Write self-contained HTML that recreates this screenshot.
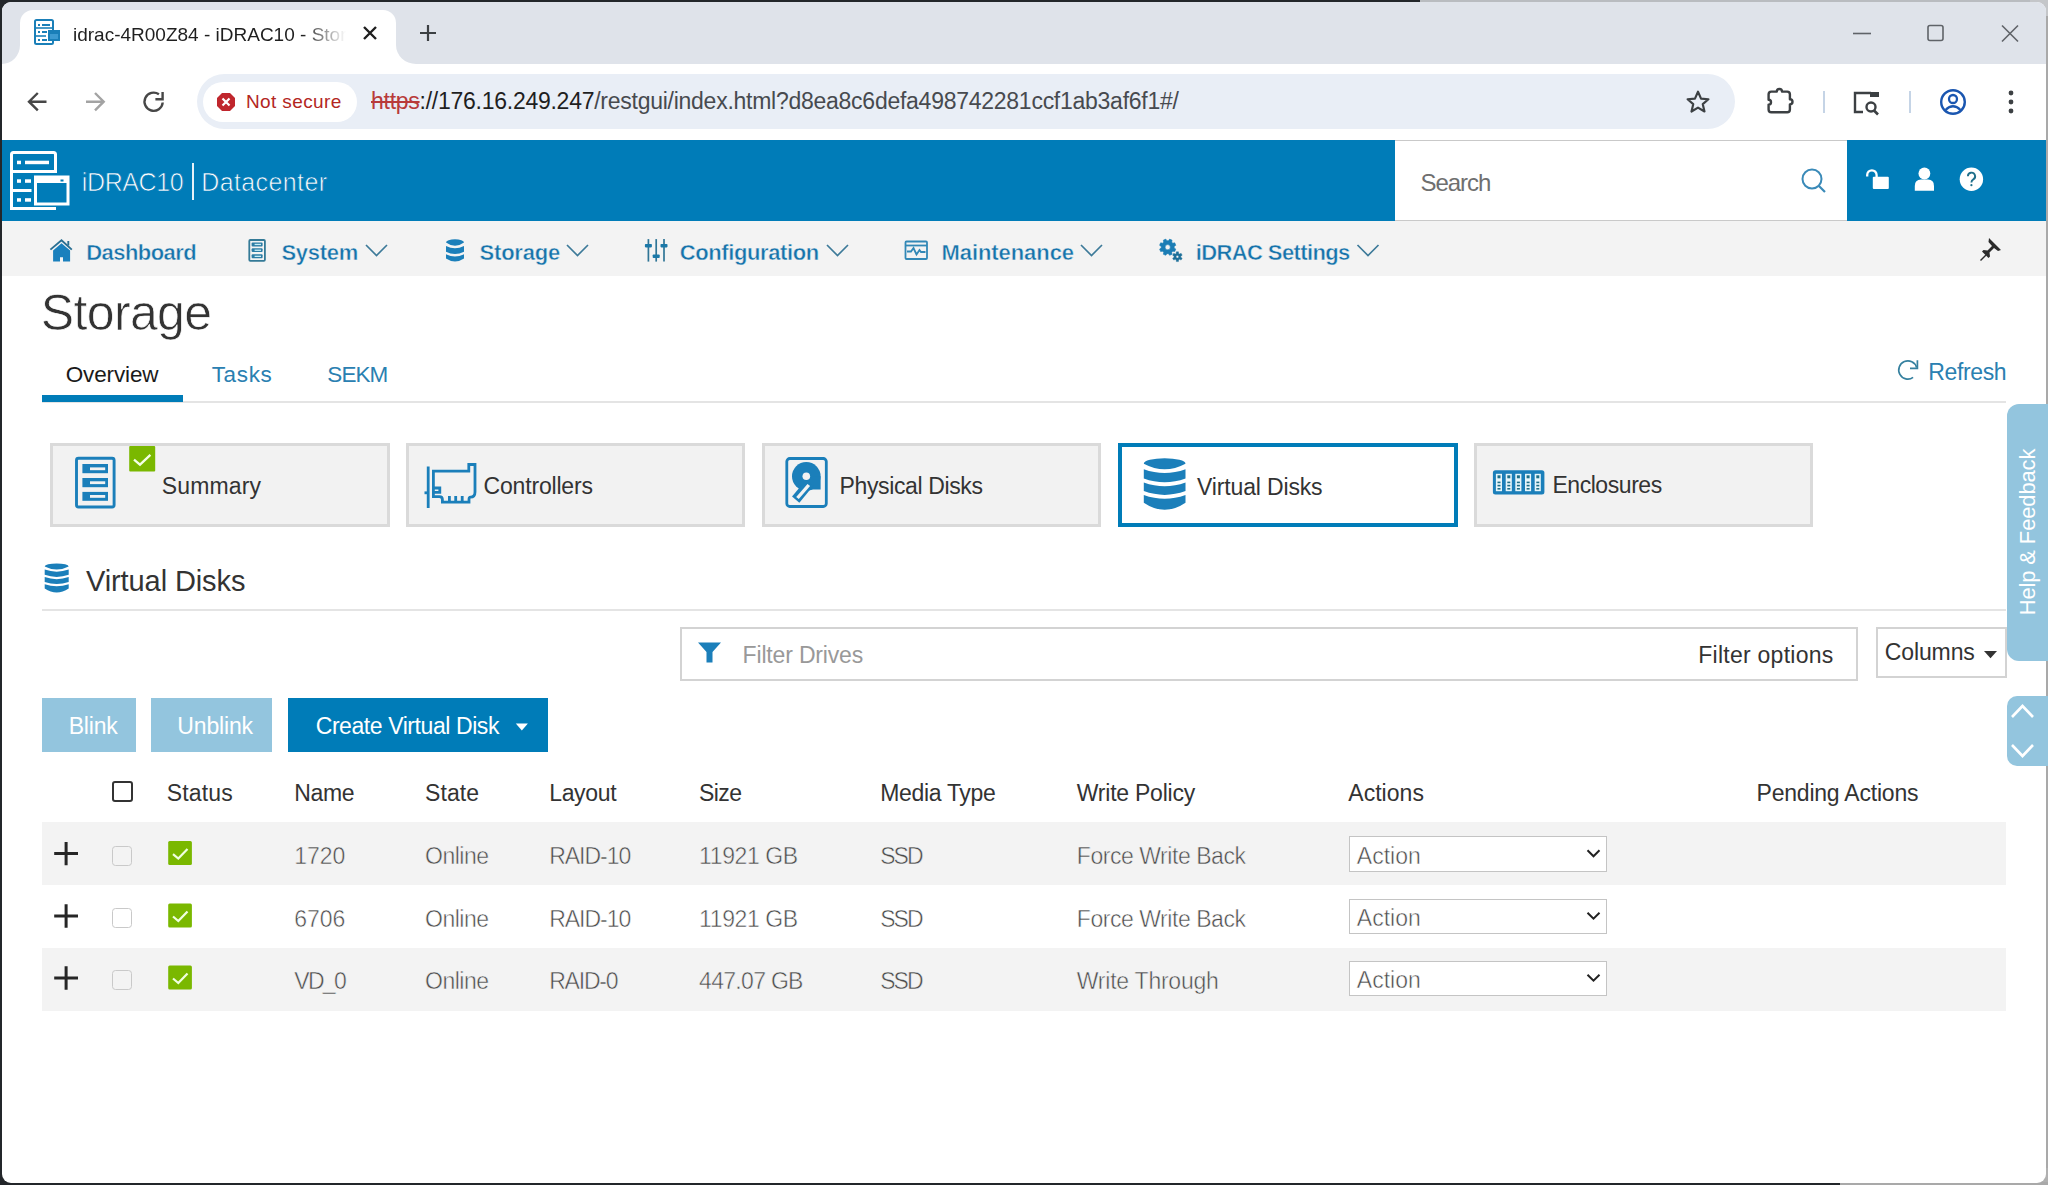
<!DOCTYPE html>
<html><head><meta charset="utf-8"><style>
html,body{margin:0;padding:0;}
body{width:2048px;height:1185px;overflow:hidden;background:#23262a;position:relative;font-family:"Liberation Sans",sans-serif;}
.a{position:absolute;}
.t{position:absolute;white-space:nowrap;line-height:1;}
svg{position:absolute;overflow:visible;}
</style></head><body>
<div class="a" style="left:1420px;top:0;width:628px;height:3px;background:#b9bcc0;"></div>
<div class="a" style="left:2045px;top:0;width:3px;height:1185px;background:#a9a9a9;"></div>
<div class="a" style="left:2030px;top:0;width:18px;height:16px;background:#c4c6c9;"></div>
<div class="a" style="left:2030px;top:1168px;width:18px;height:17px;background:#b0b0b0;"></div>
<div class="a" style="left:1840px;top:1182px;width:208px;height:3px;background:#a9a9a9;"></div>
<div class="a" style="left:2px;top:2px;width:2044px;height:1181px;background:#fff;border-radius:9px;"></div>
<div class="a" style="left:2px;top:2px;width:2044px;height:62px;background:#dfe3ea;border-radius:9px 9px 0 0;"></div>
<div class="a" style="left:20px;top:10px;width:376px;height:54px;background:#fff;border-radius:13px 13px 0 0;"></div>
<svg style="left:2px;top:45px" width="18" height="19"><path d="M0 19 A18 19 0 0 0 18 0 L18 19 Z" fill="#fff"/></svg>
<svg style="left:396px;top:45px" width="20" height="19"><path d="M20 19 A20 19 0 0 1 0 0 L0 19 Z" fill="#fff"/></svg>
<svg style="left:34px;top:19px" width="27" height="27" viewBox="0 0 27 27">
  <rect x="1" y="1" width="18" height="24" rx="1.5" fill="none" stroke="#1a7fb8" stroke-width="2"/>
  <line x1="1" y1="9" x2="19" y2="9" stroke="#1a7fb8" stroke-width="1.6"/>
  <line x1="1" y1="17" x2="12" y2="17" stroke="#1a7fb8" stroke-width="1.6"/>
  <rect x="4" y="5" width="2" height="2" fill="#1a7fb8"/><rect x="8" y="5" width="8" height="2" fill="#1a7fb8"/>
  <rect x="4" y="12" width="2" height="2" fill="#1a7fb8"/><rect x="8" y="12" width="5" height="2" fill="#1a7fb8"/>
  <rect x="4" y="20" width="2" height="2" fill="#1a7fb8"/><rect x="8" y="20" width="5" height="2" fill="#1a7fb8"/>
  <rect x="14" y="11" width="12" height="11" fill="#1a7fb8"/>
  <rect x="16" y="15" width="8" height="5" fill="#3d9ad0"/>
</svg>
<div class="t" style="left:73px;top:25px;font-size:19px;color:#1f1f1f;width:273px;overflow:hidden;-webkit-mask-image:linear-gradient(to right,#000 84%,transparent 100%);">idrac-4R00Z84 - iDRAC10 - Storage</div>
<svg style="left:362px;top:25px" width="16" height="16"><path d="M2 2 L14 14 M14 2 L2 14" stroke="#1f1f1f" stroke-width="2.4"/></svg>
<svg style="left:419px;top:24px" width="18" height="18"><path d="M9 1 V17 M1 9 H17" stroke="#3c4043" stroke-width="2.2"/></svg>
<svg style="left:1852px;top:24px" width="20" height="20"><path d="M1 9.5 H19" stroke="#5f6368" stroke-width="1.6"/></svg>
<svg style="left:1926px;top:24px" width="20" height="20"><rect x="2" y="1.5" width="15" height="15" rx="2" fill="none" stroke="#5f6368" stroke-width="1.6"/></svg>
<svg style="left:2000px;top:24px" width="20" height="20"><path d="M2 1.5 L18 17.5 M18 1.5 L2 17.5" stroke="#5f6368" stroke-width="1.6"/></svg>
<div class="a" style="left:2px;top:64px;width:2044px;height:76px;background:#fff;"></div>
<svg style="left:0;top:0" width="2048" height="1185"><g fill="none" stroke-width="2.4"><path d="M46.5 101.7 H29 M37.8 93 L29 101.7 L37.8 110.4" stroke="#474747"/><path d="M86 101.7 H103 M95 93 L103.7 101.7 L95 110.4" stroke="#a3a3a3"/><path d="M162.7 102.5 A9.1 9.1 0 1 1 158.9 94.3" stroke="#474747"/><path d="M155.4 99.3 H162.6 V92" stroke="#474747"/></g></svg>
<div class="a" style="left:197px;top:74px;width:1538px;height:55px;background:#e9eef6;border-radius:28px;"></div>
<div class="a" style="left:203px;top:82px;width:154px;height:40px;background:#fff;border-radius:20px;"></div>
<svg style="left:216px;top:92px" width="20" height="20" viewBox="0 0 20 20"><path d="M6 1 H14 L19 6 V14 L14 19 H6 L1 14 V6 Z" fill="#c0262d"/><path d="M6.5 6.5 L13.5 13.5 M13.5 6.5 L6.5 13.5" stroke="#fff" stroke-width="2.2"/></svg>
<div class="t" style="left:246px;top:92px;font-size:19px;letter-spacing:0.38px;color:#b3261e;">Not secure</div>
<div class="t" style="left:371px;top:90px;font-size:23px;letter-spacing:-0.26px;color:#1f1f1f;"><span style="color:#b83a3a;text-decoration:line-through;text-decoration-thickness:2px;">https</span>://176.16.249.247<span style="color:#474a4f">/restgui/index.html?d8ea8c6defa498742281ccf1ab3af6f1#/</span></div>
<svg style="left:1685px;top:89px" width="26" height="26" viewBox="0 0 24 24"><path d="M12 2.5 L14.8 8.9 L21.6 9.5 L16.4 14 L18 20.8 L12 17.2 L6 20.8 L7.6 14 L2.4 9.5 L9.2 8.9 Z" fill="none" stroke="#3c4043" stroke-width="2" stroke-linejoin="round"/></svg>
<svg style="left:0;top:0" width="2048" height="1185"><path d="M1768.6 94.3 Q1768.6 91.6 1771.3 91.6 H1776.8 A2.6 2.6 0 0 1 1782 91.6 H1787.2 Q1789.9 91.6 1789.9 94.3 V99.2 A2.6 2.6 0 0 1 1789.9 104.4 V109.6 Q1789.9 112.3 1787.2 112.3 H1771.3 Q1768.6 112.3 1768.6 109.6 V104.6 A2.4 2.4 0 0 0 1768.6 99.8 Z" fill="none" stroke="#3c4043" stroke-width="2.4" stroke-linejoin="round"/></svg>
<div class="a" style="left:1823px;top:91px;width:2px;height:22px;background:#c5d4e6;"></div>
<svg style="left:1852px;top:89px" width="30" height="28" viewBox="0 0 30 28"><path d="M19 4 H3 V23 H11" fill="none" stroke="#3c4043" stroke-width="2.4"/><rect x="18" y="3" width="9" height="5" fill="#3c4043"/><circle cx="19" cy="18" r="4.5" fill="none" stroke="#3c4043" stroke-width="2.4"/><path d="M22 21.5 L26 25.5" stroke="#3c4043" stroke-width="2.6"/></svg>
<div class="a" style="left:1909px;top:91px;width:2px;height:22px;background:#c5d4e6;"></div>
<svg style="left:1939px;top:88px" width="28" height="28" viewBox="0 0 28 28"><circle cx="14" cy="14" r="11.8" fill="none" stroke="#1a56b0" stroke-width="2.4"/><circle cx="14" cy="11" r="4" fill="none" stroke="#1a56b0" stroke-width="2.3"/><path d="M6.5 22 Q14 14.5 21.5 22" fill="none" stroke="#1a56b0" stroke-width="2.3"/></svg>
<svg style="left:2006px;top:90px" width="10" height="24"><circle cx="5" cy="3" r="2.4" fill="#3c4043"/><circle cx="5" cy="12" r="2.4" fill="#3c4043"/><circle cx="5" cy="21" r="2.4" fill="#3c4043"/></svg>
<div class="a" style="left:2px;top:140px;width:2044px;height:81px;background:#007cb8;"></div>
<svg style="left:0;top:0" width="2048" height="1185">
<g fill="none" stroke="#fff" stroke-width="3">
 <path d="M56 208.5 H11.5 V154.5 Q11.5 152.5 13.5 152.5 H53.5 Q55.5 152.5 55.5 154.5 V173"/>
 <line x1="11.5" y1="171.5" x2="55.5" y2="171.5"/>
 <line x1="11.5" y1="190.5" x2="31.5" y2="190.5"/>
 <rect x="35.5" y="177" width="32.5" height="27" />
</g>
<g fill="#fff">
 <rect x="17" y="160.7" width="4" height="3.5"/><rect x="25" y="160.7" width="24" height="3.5"/>
 <rect x="17" y="179.3" width="4" height="3.5"/><rect x="25" y="179.3" width="6" height="3.5"/>
 <rect x="17" y="198.2" width="4" height="3.5"/><rect x="25" y="198.2" width="6" height="3.5"/>
 <rect x="35.5" y="177" width="32.5" height="6"/>
 <rect x="60.5" y="179.5" width="3" height="2" fill="#007cb8"/>
</g>
</svg>
<div class="t" style="left:81.8px;top:170.4px;font-size:25px;letter-spacing:-0.38px;color:#fff;-webkit-text-stroke:0.7px #007cb8;">iDRAC10</div>
<div class="a" style="left:192px;top:163px;width:2px;height:37px;background:#e6f1f8;"></div>
<div class="t" style="left:201.2px;top:170.4px;font-size:25px;letter-spacing:0.40px;color:#fff;-webkit-text-stroke:0.7px #007cb8;">Datacenter</div>
<div class="a" style="left:1395px;top:140px;width:452px;height:81px;background:#fff;box-sizing:border-box;border-top:1px solid #c9c9c9;border-bottom:1px solid #c9c9c9;"></div>
<div class="t" style="left:1420.5px;top:170.6px;font-size:24px;letter-spacing:-1.06px;color:#6f6f6f;">Search</div>
<svg style="left:1800px;top:167px" width="28" height="28"><circle cx="12" cy="12" r="9.5" fill="none" stroke="#3a8ab8" stroke-width="2"/><path d="M19 19 L25 25" stroke="#3a8ab8" stroke-width="2.2"/></svg>
<svg style="left:0;top:0" width="2048" height="1185"><path d="M1867.2 176.5 V175 A4.7 4.7 0 0 1 1876.6 175 V177" fill="none" stroke="#fff" stroke-width="2.3"/><rect x="1872.8" y="176.7" width="16" height="12.3" rx="1" fill="#fff"/></svg>
<svg style="left:0;top:0" width="2048" height="1185"><circle cx="1924.4" cy="173.5" r="5.9" fill="#fff"/><path d="M1914.8 190.8 V186 Q1914.8 179.5 1921 179.5 H1928 Q1934 179.5 1934 186 V190.8 Z" fill="#fff"/></svg>
<svg style="left:0;top:0" width="2048" height="1185"><circle cx="1971.4" cy="179.3" r="11.7" fill="#fff"/><path d="M1967.9 176.3 A3.6 3.6 0 1 1 1973.3 179.4 Q1971.4 180.5 1971.4 182.6" fill="none" stroke="#1f6f8b" stroke-width="1.9"/><circle cx="1971.4" cy="185.2" r="1.1" fill="#1f6f8b"/></svg>
<div class="a" style="left:2px;top:221px;width:2044px;height:55px;background:#f3f3f3;"></div>
<div class="t" style="left:86.3px;top:242.0px;font-size:22px;letter-spacing:-0.57px;color:#1673ab;font-weight:bold;-webkit-text-stroke:0.45px #f3f3f3;">Dashboard</div>
<div class="t" style="left:281.4px;top:242.0px;font-size:22px;letter-spacing:-0.26px;color:#1673ab;font-weight:bold;-webkit-text-stroke:0.45px #f3f3f3;">System</div>
<div class="t" style="left:479.6px;top:242.0px;font-size:22px;letter-spacing:-0.23px;color:#1673ab;font-weight:bold;-webkit-text-stroke:0.45px #f3f3f3;">Storage</div>
<div class="t" style="left:679.8px;top:242.0px;font-size:22px;letter-spacing:-0.40px;color:#1673ab;font-weight:bold;-webkit-text-stroke:0.45px #f3f3f3;">Configuration</div>
<div class="t" style="left:941.5px;top:242.0px;font-size:22px;letter-spacing:-0.07px;color:#1673ab;font-weight:bold;-webkit-text-stroke:0.45px #f3f3f3;">Maintenance</div>
<div class="t" style="left:1195.8px;top:242.0px;font-size:22px;letter-spacing:-0.62px;color:#1673ab;font-weight:bold;-webkit-text-stroke:0.45px #f3f3f3;">iDRAC Settings</div>
<svg style="left:0;top:0" width="2048" height="1185">
<g fill="none" stroke="#3d7a99" stroke-width="1.7">
 <path d="M366 245 L376.5 255.5 L387 245"/>
 <path d="M567 245 L577.5 255.5 L588 245"/>
 <path d="M827 245 L837.5 255.5 L848 245"/>
 <path d="M1081 245 L1091.5 255.5 L1102 245"/>
 <path d="M1357.5 245 L1368 255.5 L1378.5 245"/>
</g>
<!-- house -->
<path d="M50.4 249.6 L61.5 240.2 L71.8 249.6" fill="none" stroke="#2a6f92" stroke-width="1.9"/>
<path d="M68.3 241 V245.5" stroke="#2a6f92" stroke-width="1.9"/>
<path d="M53.1 250.6 L61.5 243.3 L70.1 250.6 V261.6 H63 V257.2 H60 V261.6 H53.1 Z" fill="#1a80bd"/>
<!-- system -->
<rect x="249.3" y="240" width="15.6" height="20.8" rx="1" fill="none" stroke="#347a97" stroke-width="1.8"/>
<g fill="#2c7da5"><rect x="251.6" y="242.4" width="11" height="4" rx="1"/><rect x="251.6" y="248.3" width="11" height="3.8" rx="1"/><rect x="251.6" y="254.3" width="11" height="4" rx="1"/></g>
<g fill="#c8eef8"><rect x="254.6" y="243.8" width="6.4" height="1.3"/><rect x="254.6" y="249.6" width="6.4" height="1.3"/><rect x="254.6" y="255.7" width="6.4" height="1.3"/></g>
<!-- storage db -->
<g fill="#1b7fba" transform="translate(446 239.2)">
 <path d="M0 3.3 A9 3.3 0 0 1 18 3.3 Q9 9.9 0 3.3 Z"/>
 <path d="M0 6.8 Q9 11.4 18 6.8 V12.6 Q9 17.2 0 12.6 Z"/>
 <path d="M0 15 Q9 19.6 18 15 V19.2 Q9 25.2 0 19.2 Z"/>
</g>
<!-- config sliders -->
<g stroke="#2f7596" stroke-width="1.7">
 <line x1="648.4" y1="239.1" x2="648.4" y2="261.6"/><line x1="656.2" y1="239.1" x2="656.2" y2="261.6"/><line x1="664" y1="239.1" x2="664" y2="261.6"/>
</g>
<g fill="#1b78a8"><rect x="644.9" y="244" width="7" height="3.4" rx="0.8"/><rect x="652.7" y="254.5" width="7" height="3.5" rx="0.8"/><rect x="660.5" y="244" width="7" height="3.4" rx="0.8"/></g>
<!-- maintenance -->
<g fill="none" stroke="#3288b6" stroke-width="1.8">
 <rect x="905.5" y="241.5" width="21.5" height="17.5" rx="1"/>
 <line x1="905.5" y1="245.5" x2="927" y2="245.5"/>
 <path d="M907 251.5 H911 L913.5 248 L916.5 254.5 L919.5 250 L921 252 H925.5"/>
</g>
<!-- gears -->
<path d="M1175.78 249.10 L1174.76 251.57 L1172.82 251.20 L1171.70 252.32 L1172.07 254.26 L1169.60 255.28 L1168.50 253.65 L1166.90 253.65 L1165.80 255.28 L1163.33 254.26 L1163.70 252.32 L1162.58 251.20 L1160.64 251.57 L1159.62 249.10 L1161.25 248.00 L1161.25 246.40 L1159.62 245.30 L1160.64 242.83 L1162.58 243.20 L1163.70 242.08 L1163.33 240.14 L1165.80 239.12 L1166.90 240.75 L1168.50 240.75 L1169.60 239.12 L1172.07 240.14 L1171.70 242.08 L1172.82 243.20 L1174.76 242.83 L1175.78 245.30 L1174.15 246.40 L1174.15 248.00 Z M1170.30 247.20 A2.6 2.6 0 1 0 1165.10 247.20 A2.6 2.6 0 1 0 1170.30 247.20 Z" fill="#1b7db5" fill-rule="evenodd" stroke="#1b7db5" stroke-width="0.6" stroke-linejoin="round"/>
<path d="M1182.17 258.21 L1181.09 260.07 L1179.56 259.33 L1178.60 259.88 L1178.47 261.58 L1176.33 261.58 L1176.20 259.88 L1175.24 259.33 L1173.71 260.07 L1172.63 258.21 L1174.05 257.25 L1174.05 256.15 L1172.63 255.19 L1173.71 253.33 L1175.24 254.07 L1176.20 253.52 L1176.33 251.82 L1178.47 251.82 L1178.60 253.52 L1179.56 254.07 L1181.09 253.33 L1182.17 255.19 L1180.75 256.15 L1180.75 257.25 Z M1178.70 256.70 A1.3 1.3 0 1 0 1176.10 256.70 A1.3 1.3 0 1 0 1178.70 256.70 Z" fill="#1d6f99" fill-rule="evenodd" stroke="#1d6f99" stroke-width="0.4" stroke-linejoin="round"/>
<!-- pin -->
<g fill="#2b2b2b">
 <path d="M1989 238 L2001 250 L1998 251 L1994 248 L1989.5 252.5 L1990 256.5 L1988.5 258 L1982 251.5 L1983.5 250 L1987.5 250.5 L1992 246 L1988.5 242 Z"/>
 <path d="M1985.5 254.5 L1980 260 L1981 261 L1986.5 255.5 Z"/>
</g>
</svg>
<div class="t" style="left:40.7px;top:287.6px;font-size:50px;letter-spacing:-0.62px;color:#333;-webkit-text-stroke:0.7px #fff;">Storage</div>
<div class="t" style="left:65.7px;top:364.1px;font-size:22.5px;letter-spacing:-0.13px;color:#1a1a1a;">Overview</div>
<div class="t" style="left:211.7px;top:364.1px;font-size:22.5px;letter-spacing:0.65px;color:#2a80b1;">Tasks</div>
<div class="t" style="left:327.3px;top:364.1px;font-size:22.5px;letter-spacing:-0.90px;color:#2a80b1;">SEKM</div>
<div class="a" style="left:42px;top:401px;width:1964px;height:2px;background:#e4e4e4;"></div>
<div class="a" style="left:42px;top:394.5px;width:141px;height:7.5px;background:#007cb8;"></div>
<svg style="left:0;top:0" width="2048" height="1185"><g fill="none" stroke="#35809f" stroke-width="1.7"><path d="M1913.1 377.4 A9.1 9.1 0 1 1 1916.6 367.4"/><path d="M1917.4 360.3 V368.4 H1910"/></g></svg>
<div class="t" style="left:1928.3px;top:361.3px;font-size:23px;letter-spacing:-0.37px;color:#2a80b1;">Refresh</div>
<div class="a" style="left:2007px;top:404px;width:41px;height:257px;background:#93c5de;border-radius:12px 0 0 12px;"></div>
<div class="t" style="left:2028px;top:532px;font-size:22px;color:#fff;transform:translate(-50%,-50%) rotate(-90deg);letter-spacing:-0.15px;">Help &amp; Feedback</div>
<div class="a" style="left:2007px;top:696px;width:41px;height:70px;background:#93c5de;border-radius:10px 0 0 10px;"></div>
<svg style="left:0;top:0" width="2048" height="1185"><g fill="none" stroke="#fff" stroke-width="2.6"><path d="M2012 717 L2022.5 706 L2033 717"/><path d="M2012 745 L2022.5 756 L2033 745"/></g></svg>
<div class="a" style="left:50px;top:443px;width:340px;height:84px;box-sizing:border-box;background:#f2f2f2;border:3px solid #dadada;"></div>
<div class="a" style="left:406px;top:443px;width:339px;height:84px;box-sizing:border-box;background:#f2f2f2;border:3px solid #dadada;"></div>
<div class="a" style="left:761.5px;top:443px;width:339.5px;height:84px;box-sizing:border-box;background:#f2f2f2;border:3px solid #dadada;"></div>
<div class="a" style="left:1473.5px;top:443px;width:339.5px;height:84px;box-sizing:border-box;background:#f2f2f2;border:3px solid #dadada;"></div>
<div class="a" style="left:1117.5px;top:443px;width:340px;height:84px;box-sizing:border-box;background:#fff;border:4px solid #007cb8;"></div>
<div class="t" style="left:161.8px;top:475.1px;font-size:23px;letter-spacing:0.13px;color:#333;">Summary</div>
<div class="t" style="left:483.6px;top:475.1px;font-size:23px;letter-spacing:-0.19px;color:#333;">Controllers</div>
<div class="t" style="left:839.5px;top:475.1px;font-size:23px;letter-spacing:-0.37px;color:#333;">Physical Disks</div>
<div class="t" style="left:1197.1px;top:476.1px;font-size:23px;letter-spacing:-0.16px;color:#333;">Virtual Disks</div>
<div class="t" style="left:1552.4px;top:474.3px;font-size:23px;letter-spacing:-0.44px;color:#333;">Enclosures</div>
<svg style="left:0;top:0" width="2048" height="1185">
<!-- summary icon -->
<rect x="76.5" y="458.2" width="37.6" height="48.8" rx="2" fill="none" stroke="#1b7fba" stroke-width="2.9"/>
<g fill="#1b7fba"><rect x="82.4" y="464" width="25.6" height="9.2"/><rect x="82.4" y="478" width="25.6" height="9.2"/><rect x="82.4" y="491.9" width="25.6" height="8.9"/></g>
<g fill="#f2f2f2"><rect x="90" y="467.4" width="15.2" height="2.8"/><rect x="90" y="481.3" width="15.2" height="2.8"/><rect x="90" y="495" width="15.2" height="2.8"/></g>
<rect x="129.2" y="446" width="26" height="25.6" rx="1" fill="#7ab800"/>
<path d="M134 459.6 L140 464.6 L150.4 454.9" fill="none" stroke="#f4ffe6" stroke-width="2.3"/>
<!-- controllers icon -->
<g fill="none" stroke="#1b7fba" stroke-width="2.8">
 <path d="M428.2 466.5 V508"/>
 <path d="M433.4 496.6 V471.1 H468.8 V464.5 H475 V492 Q475 497.2 470.5 497.2 Q469 497.2 469 499.5 V502.1 H442.4 V499.5 Q442.4 496.6 439.5 496.6 Z"/>
 <path d="M433.4 488 H439.8 V492.4 H433.4"/>
 <path d="M424.5 492.8 H428"/>
</g>
<g fill="#1b7fba"><rect x="448" y="496" width="2.8" height="6"/><rect x="454.3" y="496" width="2.8" height="6"/><rect x="460.8" y="496" width="2.8" height="6"/></g>
<!-- physical disks icon -->
<rect x="786.8" y="458.5" width="39.5" height="48" rx="3" fill="none" stroke="#1b7fba" stroke-width="2.8"/>
<circle cx="806.3" cy="476.3" r="14.3" fill="#1b7fba"/>
<rect x="806.3" y="476.3" width="14.3" height="13.2" fill="#1b7fba"/>
<circle cx="806.3" cy="476.3" r="3.8" fill="#f2f2f2"/>
<path d="M809.5 483 L795.7 499.6" stroke="#1b7fba" stroke-width="9.5"/>
<path d="M808.8 485 L797.5 498" stroke="#f2f2f2" stroke-width="3.4"/>
<!-- virtual disks icon (card) -->
<g fill="#1b7fba" transform="translate(1143.8 458.2)">
 <path d="M0 5.5 A20.85 5.5 0 0 1 41.7 5.5 Q20.85 16.5 0 5.5 Z"/>
 <path d="M0 11 Q20.85 18.6 41.7 11 V20.3 Q20.85 27.9 0 20.3 Z"/>
 <path d="M0 24.2 Q20.85 31.8 41.7 24.2 V32.9 Q20.85 40.5 0 32.9 Z"/>
 <path d="M0 36.8 Q20.85 44.4 41.7 36.8 V44.5 Q20.85 58.7 0 44.5 Z"/>
</g>
<!-- enclosures icon -->
<rect x="1492.9" y="470.3" width="51.5" height="24.3" rx="2.5" fill="#1b7fba"/>
<g fill="#e6f6fb">
 <rect x="1495.9" y="473.8" width="6.1" height="17.4"/><rect x="1505.7" y="473.8" width="6.1" height="17.4"/><rect x="1515.3" y="473.8" width="6.1" height="17.4"/><rect x="1525" y="473.8" width="6.1" height="17.4"/><rect x="1534.7" y="473.8" width="6.1" height="17.4"/>
</g>
<g fill="#1f6f86">
 <rect x="1497.5" y="475.3" width="3" height="3"/><rect x="1497.5" y="481.6" width="3" height="1.6"/><rect x="1497.5" y="484.8" width="3" height="1.6"/><rect x="1497.5" y="488" width="3" height="1.6"/>
 <rect x="1507.3" y="475.3" width="3" height="3"/><rect x="1507.3" y="481.6" width="3" height="1.6"/><rect x="1507.3" y="484.8" width="3" height="1.6"/><rect x="1507.3" y="488" width="3" height="1.6"/>
 <rect x="1516.9" y="475.3" width="3" height="3"/><rect x="1516.9" y="481.6" width="3" height="1.6"/><rect x="1516.9" y="484.8" width="3" height="1.6"/><rect x="1516.9" y="488" width="3" height="1.6"/>
 <rect x="1526.6" y="475.3" width="3" height="3"/><rect x="1526.6" y="481.6" width="3" height="1.6"/><rect x="1526.6" y="484.8" width="3" height="1.6"/><rect x="1526.6" y="488" width="3" height="1.6"/>
 <rect x="1536.3" y="475.3" width="3" height="3"/><rect x="1536.3" y="481.6" width="3" height="1.6"/><rect x="1536.3" y="484.8" width="3" height="1.6"/><rect x="1536.3" y="488" width="3" height="1.6"/>
</g>
<!-- section db icon -->
<g fill="#1b7fba" transform="translate(44.7 563.4) scale(0.5755 0.564)">
 <path d="M0 5.5 A20.85 5.5 0 0 1 41.7 5.5 Q20.85 16.5 0 5.5 Z"/>
 <path d="M0 11 Q20.85 18.6 41.7 11 V20.3 Q20.85 27.9 0 20.3 Z"/>
 <path d="M0 24.2 Q20.85 31.8 41.7 24.2 V32.9 Q20.85 40.5 0 32.9 Z"/>
 <path d="M0 36.8 Q20.85 44.4 41.7 36.8 V44.5 Q20.85 58.7 0 44.5 Z"/>
</g>
</svg>
<div class="t" style="left:86.0px;top:567.0px;font-size:29px;letter-spacing:-0.10px;color:#333;">Virtual Disks</div>
<div class="a" style="left:42px;top:608.5px;width:1964px;height:2px;background:#e4e4e4;"></div>
<div class="a" style="left:680px;top:626.5px;width:1178px;height:54px;box-sizing:border-box;border:2px solid #d3d3d3;background:#fff;"></div>
<svg style="left:0;top:0" width="2048" height="1185"><path d="M698 642.5 H721 L712.5 652 V662.5 H706.5 V652 Z" fill="#1b7fba"/></svg>
<div class="t" style="left:742.6px;top:643.5px;font-size:23px;letter-spacing:-0.17px;color:#999;">Filter Drives</div>
<div class="t" style="left:1698.3px;top:643.5px;font-size:23px;letter-spacing:0.25px;color:#333;">Filter options</div>
<div class="a" style="left:1875.5px;top:626.5px;width:131px;height:51.5px;box-sizing:border-box;border:2px solid #d3d3d3;background:#fff;"></div>
<div class="t" style="left:1884.8px;top:641.1px;font-size:23px;letter-spacing:-0.12px;color:#333;">Columns</div>
<svg style="left:0;top:0" width="2048" height="1185"><path d="M1984 651 H1997 L1990.5 658.2 Z" fill="#333"/></svg>
<div class="a" style="left:42px;top:698px;width:94.3px;height:54.2px;background:#93c5de;"></div>
<div class="a" style="left:151px;top:698px;width:121px;height:54.2px;background:#93c5de;"></div>
<div class="a" style="left:288.4px;top:698px;width:259.4px;height:54.2px;background:#007cb8;"></div>
<div class="t" style="left:68.7px;top:714.9px;font-size:23px;letter-spacing:-0.20px;color:#fff;">Blink</div>
<div class="t" style="left:177.3px;top:714.9px;font-size:23px;letter-spacing:-0.15px;color:#fff;">Unblink</div>
<div class="t" style="left:315.7px;top:714.9px;font-size:23px;letter-spacing:-0.42px;color:#fff;">Create Virtual Disk</div>
<svg style="left:0;top:0" width="2048" height="1185"><path d="M515.8 723.4 H527.9 L521.85 730.6 Z" fill="#fff"/></svg>
<div class="t" style="left:166.8px;top:781.6px;font-size:23px;letter-spacing:0.16px;color:#333;">Status</div>
<div class="t" style="left:294.3px;top:781.6px;font-size:23px;letter-spacing:-0.33px;color:#333;">Name</div>
<div class="t" style="left:425.1px;top:781.6px;font-size:23px;letter-spacing:0.05px;color:#333;">State</div>
<div class="t" style="left:549.2px;top:781.6px;font-size:23px;letter-spacing:-0.34px;color:#333;">Layout</div>
<div class="t" style="left:699.1px;top:781.6px;font-size:23px;letter-spacing:-0.60px;color:#333;">Size</div>
<div class="t" style="left:880.3px;top:781.6px;font-size:23px;letter-spacing:-0.34px;color:#333;">Media Type</div>
<div class="t" style="left:1076.8px;top:781.6px;font-size:23px;letter-spacing:-0.24px;color:#333;">Write Policy</div>
<div class="t" style="left:1348.3px;top:781.6px;font-size:23px;letter-spacing:0.03px;color:#333;">Actions</div>
<div class="t" style="left:1756.5px;top:781.6px;font-size:23px;letter-spacing:-0.21px;color:#333;">Pending Actions</div>
<div class="a" style="left:111.5px;top:780.5px;width:21px;height:21px;box-sizing:border-box;border:2px solid #333;border-radius:3px;background:#fff;"></div>
<div class="a" style="left:42px;top:821.6px;width:1964px;height:63.5px;background:#f3f3f3;"></div>
<svg style="left:0;top:0" width="2048" height="1185"><path d="M54.2 853.6 H78 M66.1 841.9 V865.3000000000001" stroke="#262626" stroke-width="3"/></svg>
<div class="a" style="left:111.8px;top:845.8000000000001px;width:20px;height:20px;box-sizing:border-box;border:1.5px solid #c9c9c9;border-radius:3.5px;"></div>
<svg style="left:0;top:0" width="2048" height="1185"><rect x="168.2" y="841.0" width="23.7" height="24" rx="1.5" fill="#7ab800"/><path d="M173 854.1 L178.3 858.6 L187.5 849.1" fill="none" stroke="#f0ffe0" stroke-width="2.2"/></svg>
<div class="t" style="left:294.3px;top:845.2px;font-size:23px;letter-spacing:-0.03px;color:#4b4b4b;-webkit-text-stroke:0.5px #f3f3f3;">1720</div>
<div class="t" style="left:425.1px;top:845.2px;font-size:23px;letter-spacing:-0.52px;color:#4b4b4b;-webkit-text-stroke:0.5px #f3f3f3;">Online</div>
<div class="t" style="left:549.2px;top:845.2px;font-size:23px;letter-spacing:-1.02px;color:#4b4b4b;-webkit-text-stroke:0.5px #f3f3f3;">RAID-10</div>
<div class="t" style="left:699.1px;top:845.2px;font-size:23px;letter-spacing:-0.40px;color:#4b4b4b;-webkit-text-stroke:0.5px #f3f3f3;">11921 GB</div>
<div class="t" style="left:880.3px;top:845.2px;font-size:23px;letter-spacing:-2.05px;color:#4b4b4b;-webkit-text-stroke:0.5px #f3f3f3;">SSD</div>
<div class="t" style="left:1076.8px;top:845.2px;font-size:23px;letter-spacing:-0.45px;color:#4b4b4b;-webkit-text-stroke:0.5px #f3f3f3;">Force Write Back</div>
<div class="a" style="left:1349px;top:836.3000000000001px;width:258px;height:35.5px;box-sizing:border-box;border:1.5px solid #c4c4c4;background:#fff;"></div>
<div class="t" style="left:1356.8px;top:844.7px;font-size:23px;letter-spacing:0.00px;color:#4a4a4a;-webkit-text-stroke:0.5px #fff;">Action</div>
<svg style="left:0;top:0" width="2048" height="1185"><path d="M1587.5 850.3000000000001 L1593.5 856.3000000000001 L1599.5 850.3000000000001" fill="none" stroke="#222" stroke-width="2"/></svg>
<div class="a" style="left:42px;top:885.3px;width:1964px;height:62.5px;background:#fff;"></div>
<svg style="left:0;top:0" width="2048" height="1185"><path d="M54.2 916.0 H78 M66.1 904.3 V927.7" stroke="#262626" stroke-width="3"/></svg>
<div class="a" style="left:111.8px;top:908.2px;width:20px;height:20px;box-sizing:border-box;border:1.5px solid #c9c9c9;border-radius:3.5px;"></div>
<svg style="left:0;top:0" width="2048" height="1185"><rect x="168.2" y="903.4" width="23.7" height="24" rx="1.5" fill="#7ab800"/><path d="M173 916.5 L178.3 921.0 L187.5 911.5" fill="none" stroke="#f0ffe0" stroke-width="2.2"/></svg>
<div class="t" style="left:294.3px;top:907.6px;font-size:23px;letter-spacing:-0.03px;color:#4b4b4b;-webkit-text-stroke:0.5px #fff;">6706</div>
<div class="t" style="left:425.1px;top:907.6px;font-size:23px;letter-spacing:-0.52px;color:#4b4b4b;-webkit-text-stroke:0.5px #fff;">Online</div>
<div class="t" style="left:549.2px;top:907.6px;font-size:23px;letter-spacing:-1.02px;color:#4b4b4b;-webkit-text-stroke:0.5px #fff;">RAID-10</div>
<div class="t" style="left:699.1px;top:907.6px;font-size:23px;letter-spacing:-0.40px;color:#4b4b4b;-webkit-text-stroke:0.5px #fff;">11921 GB</div>
<div class="t" style="left:880.3px;top:907.6px;font-size:23px;letter-spacing:-2.05px;color:#4b4b4b;-webkit-text-stroke:0.5px #fff;">SSD</div>
<div class="t" style="left:1076.8px;top:907.6px;font-size:23px;letter-spacing:-0.45px;color:#4b4b4b;-webkit-text-stroke:0.5px #fff;">Force Write Back</div>
<div class="a" style="left:1349px;top:898.7px;width:258px;height:35.5px;box-sizing:border-box;border:1.5px solid #c4c4c4;background:#fff;"></div>
<div class="t" style="left:1356.8px;top:907.1px;font-size:23px;letter-spacing:0.00px;color:#4a4a4a;-webkit-text-stroke:0.5px #fff;">Action</div>
<svg style="left:0;top:0" width="2048" height="1185"><path d="M1587.5 912.7 L1593.5 918.7 L1599.5 912.7" fill="none" stroke="#222" stroke-width="2"/></svg>
<div class="a" style="left:42px;top:947.8px;width:1964px;height:63.5px;background:#f3f3f3;"></div>
<svg style="left:0;top:0" width="2048" height="1185"><path d="M54.2 978.0 H78 M66.1 966.3 V989.7" stroke="#262626" stroke-width="3"/></svg>
<div class="a" style="left:111.8px;top:970.2px;width:20px;height:20px;box-sizing:border-box;border:1.5px solid #c9c9c9;border-radius:3.5px;"></div>
<svg style="left:0;top:0" width="2048" height="1185"><rect x="168.2" y="965.4" width="23.7" height="24" rx="1.5" fill="#7ab800"/><path d="M173 978.5 L178.3 983.0 L187.5 973.5" fill="none" stroke="#f0ffe0" stroke-width="2.2"/></svg>
<div class="t" style="left:294.3px;top:969.6px;font-size:23px;letter-spacing:-1.70px;color:#4b4b4b;-webkit-text-stroke:0.5px #f3f3f3;">VD_0</div>
<div class="t" style="left:425.1px;top:969.6px;font-size:23px;letter-spacing:-0.52px;color:#4b4b4b;-webkit-text-stroke:0.5px #f3f3f3;">Online</div>
<div class="t" style="left:549.2px;top:969.6px;font-size:23px;letter-spacing:-1.20px;color:#4b4b4b;-webkit-text-stroke:0.5px #f3f3f3;">RAID-0</div>
<div class="t" style="left:699.1px;top:969.6px;font-size:23px;letter-spacing:-0.70px;color:#4b4b4b;-webkit-text-stroke:0.5px #f3f3f3;">447.07 GB</div>
<div class="t" style="left:880.3px;top:969.6px;font-size:23px;letter-spacing:-2.05px;color:#4b4b4b;-webkit-text-stroke:0.5px #f3f3f3;">SSD</div>
<div class="t" style="left:1076.8px;top:969.6px;font-size:23px;letter-spacing:-0.24px;color:#4b4b4b;-webkit-text-stroke:0.5px #f3f3f3;">Write Through</div>
<div class="a" style="left:1349px;top:960.7px;width:258px;height:35.5px;box-sizing:border-box;border:1.5px solid #c4c4c4;background:#fff;"></div>
<div class="t" style="left:1356.8px;top:969.1px;font-size:23px;letter-spacing:0.00px;color:#4a4a4a;-webkit-text-stroke:0.5px #fff;">Action</div>
<svg style="left:0;top:0" width="2048" height="1185"><path d="M1587.5 974.7 L1593.5 980.7 L1599.5 974.7" fill="none" stroke="#222" stroke-width="2"/></svg>
</body></html>
